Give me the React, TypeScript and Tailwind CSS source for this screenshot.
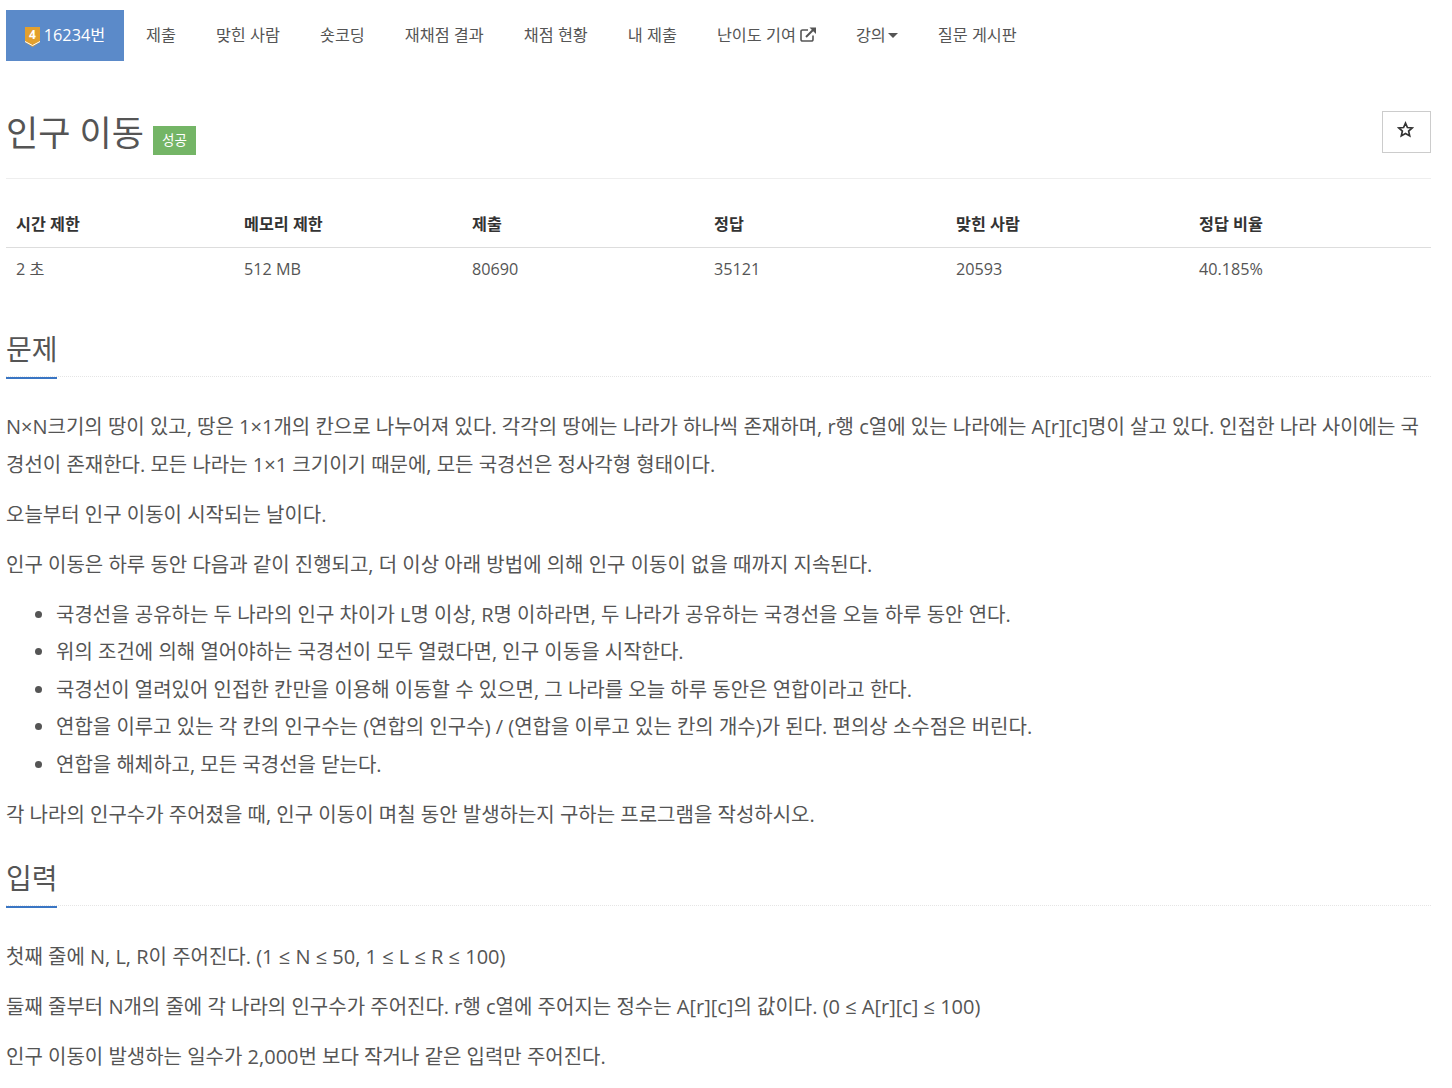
const navItems = ["제출", "맞힌 사람", "숏코딩", "재채점 결과", "채점 현황", "내 제출"];

const statHeaders = [
  { label: "시간 제한", value: "2 초", width: "w-[228px]" },
  { label: "메모리 제한", value: "512 MB", width: "w-[228px]" },
  { label: "제출", value: "80690", width: "w-[242px]" },
  { label: "정답", value: "35121", width: "w-[242px]" },
  { label: "맞힌 사람", value: "20593", width: "w-[243px]" },
  { label: "정답 비율", value: "40.185%", width: "flex-1" },
];

const rules = [
  "국경선을 공유하는 두 나라의 인구 차이가 L명 이상, R명 이하라면, 두 나라가 공유하는 국경선을 오늘 하루 동안 연다.",
  "위의 조건에 의해 열어야하는 국경선이 모두 열렸다면, 인구 이동을 시작한다.",
  "국경선이 열려있어 인접한 칸만을 이용해 이동할 수 있으면, 그 나라를 오늘 하루 동안은 연합이라고 한다.",
  "연합을 이루고 있는 각 칸의 인구수는 (연합의 인구수) / (연합을 이루고 있는 칸의 개수)가 된다. 편의상 소수점은 버린다.",
  "연합을 해체하고, 모든 국경선을 닫는다.",
];

function SectionTitle({ children }: { children: string }) {
  return (
    <div className="relative h-[48px] border-b border-dotted border-[#e5e5e5]">
      <h2 className="text-[28px] leading-[40px] text-[#555]">{children}</h2>
      <div className="absolute bottom-[-3px] left-0 h-[2px] w-[51px] bg-[#3a76c4]" />
    </div>
  );
}

export default function App() {
  return (
    <div
      className="h-[1088px] overflow-hidden bg-white pl-[6px] pr-[21px] pt-[10px] text-[20px] text-[#555]"
      style={{ fontFamily: '"Open Sans", "Noto Sans CJK KR", sans-serif' }}
    >
      <nav className="flex h-[51px] items-center text-[16.25px] text-[#555]">
        <div className="mr-[2px] flex h-full w-[118px] items-center justify-center gap-[4px] bg-[#5b8ac9] text-white">
          <svg width="15" height="20" viewBox="0 0 15 20" className="mt-[2px]">
            <path d="M0 0h15v15l-7.5 5L0 15z" fill="#e3a02d" />
            <path d="M0 14.5l7.5 4 7.5-4" fill="none" stroke="#fff" strokeWidth="1" />
            <text x="7.5" y="12" textAnchor="middle" fontSize="12" fontWeight="700" fill="#fff">4</text>
          </svg>
          <span>16234번</span>
        </div>
        {navItems.map((item) => (
          <a key={item} className="whitespace-nowrap px-[20px]">{item}</a>
        ))}
        <a className="flex items-center gap-[4px] whitespace-nowrap px-[20px]">
          난이도 기여
          <svg width="16" height="15" viewBox="0 0 16 15" fill="none" stroke="#555" className="mb-[2px]">
            <path d="M13 8.5V12.5a1.5 1.5 0 0 1-1.5 1.5h-9A1.5 1.5 0 0 1 1 12.5v-8A1.5 1.5 0 0 1 2.500 3H8" strokeWidth="1.6" />
            <path d="M6 10L13 3" strokeWidth="2" />
            <path d="M9.500 0.500H16V7z" fill="#555" stroke="none" />
          </svg>
        </a>
        <a className="flex items-center gap-[2px] whitespace-nowrap px-[20px]">
          강의
          <span className="h-0 w-0 border-x-[5px] border-t-[5px] border-x-transparent border-t-[#555]" />
        </a>
        <a className="whitespace-nowrap px-[20px]">질문 게시판</a>
      </nav>

      <div className="mt-[50px] flex h-[68px] items-start justify-between border-b border-[#eee]">
        <div className="flex items-end gap-[9px]">
          <h1 className="text-[35px] leading-[44px] text-[#555]">인구 이동</h1>
          <span className="flex h-[29px] w-[43px] items-center justify-center bg-[#74b566] text-[13.5px] text-white">성공</span>
        </div>
        <button className="flex h-[42px] w-[49px] items-center justify-center border border-[#ccc] pb-[5px] pr-[2px]">
          <svg width="17" height="17" viewBox="0 0 24 24" fill="none" stroke="#333" strokeWidth="2.4" strokeLinejoin="miter">
            <path d="M12 3l2.700 6.200 6.800.600-5.100 4.500 1.500 6.700L12 17.500 6.100 21l1.500-6.700L2.500 9.800l6.800-.600z" />
          </svg>
        </button>
      </div>

      <div className="mt-[25px] flex h-[44px] items-center border-b border-[#ddd] pb-[2px] text-[16.2px] font-bold text-[#333]">
        {statHeaders.map((s) => (
          <div key={s.label} className={`${s.width} pl-[10px]`}>{s.label}</div>
        ))}
      </div>
      <div className="flex h-[43px] items-center text-[16.2px] text-[#555]">
        {statHeaders.map((s) => (
          <div key={s.label} className={`${s.width} pl-[10px]`}>{s.value}</div>
        ))}
      </div>

      <div className="mt-[38px]">
        <SectionTitle>문제</SectionTitle>
      </div>
      <div className="mt-[31px] leading-[38px]">
        <p>N×N크기의 땅이 있고, 땅은 1×1개의 칸으로 나누어져 있다. 각각의 땅에는 나라가 하나씩 존재하며, r행 c열에 있는 나라에는 A[r][c]명이 살고 있다. 인접한 나라 사이에는 국경선이 존재한다. 모든 나라는 1×1 크기이기 때문에, 모든 국경선은 정사각형 형태이다.</p>
        <p className="mt-[12px]">오늘부터 인구 이동이 시작되는 날이다.</p>
        <p className="mt-[12px]">인구 이동은 하루 동안 다음과 같이 진행되고, 더 이상 아래 방법에 의해 인구 이동이 없을 때까지 지속된다.</p>
        <ul className="mt-[11.5px] list-disc pl-[50px]">
          {rules.map((r) => (
            <li key={r} className="leading-[37.5px]">{r}</li>
          ))}
        </ul>
        <p className="mt-[12.5px]">각 나라의 인구수가 주어졌을 때, 인구 이동이 며칠 동안 발생하는지 구하는 프로그램을 작성하시오.</p>
      </div>

      <div className="mt-[24px]">
        <SectionTitle>입력</SectionTitle>
      </div>
      <div className="mt-[32px] leading-[38px]">
        <p>첫째 줄에 N, L, R이 주어진다. (1 ≤ N ≤ 50, 1 ≤ L ≤ R ≤ 100)</p>
        <p className="mt-[12px]">둘째 줄부터 N개의 줄에 각 나라의 인구수가 주어진다. r행 c열에 주어지는 정수는 A[r][c]의 값이다. (0 ≤ A[r][c] ≤ 100)</p>
        <p className="mt-[12px]">인구 이동이 발생하는 일수가 2,000번 보다 작거나 같은 입력만 주어진다.</p>
      </div>
    </div>
  );
}
